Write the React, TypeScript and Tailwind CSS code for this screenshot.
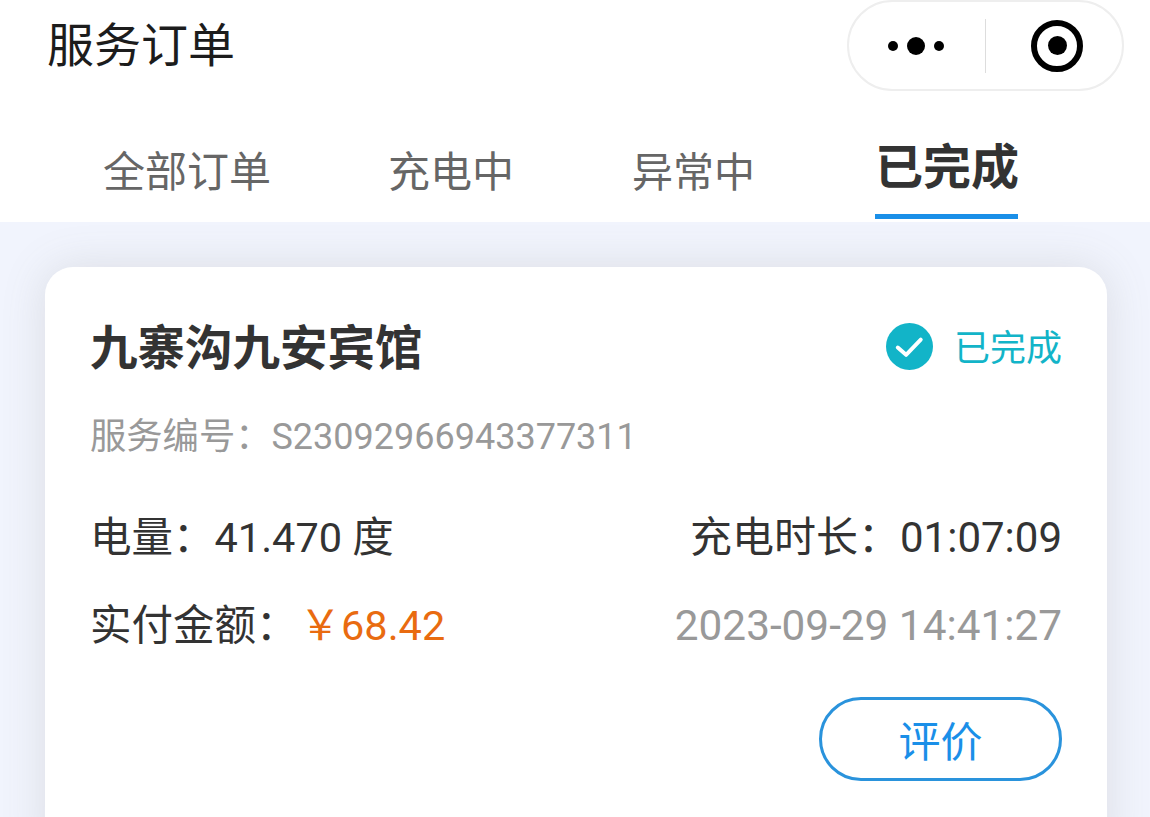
export default function App() {
  const font = { fontFamily: '"Roboto", "Noto Sans CJK SC", sans-serif' };
  return (
    <div style={font} className="w-[1150px] h-[817px] overflow-hidden bg-[#f1f4fd] text-[#333333]">
      <div className="bg-white h-[222px] relative z-10">
        <div className="flex justify-between items-start pl-[47px] pr-[26px] h-[122px]">
          <div className="text-[47px] leading-[56px] mt-[18px] text-[#1c1c1c]">服务订单</div>
          <div className="w-[277px] h-[91px] rounded-[46px] border-2 border-[#eeeeee] flex items-center bg-white">
            <div className="w-[95px] flex items-center justify-end gap-[9px]">
              <span className="w-[10px] h-[10px] rounded-full bg-black" />
              <span className="w-[18px] h-[18px] rounded-full bg-black" />
              <span className="w-[10px] h-[10px] rounded-full bg-black" />
            </div>
            <div className="w-[1px] h-[54px] bg-[#dddddd] ml-[41px]" />
            <div className="ml-[45px] w-[52px] h-[52px] rounded-full border-[6.5px] border-black flex items-center justify-center">
              <span className="w-[19px] h-[19px] rounded-full bg-black shrink-0" />
            </div>
          </div>
        </div>
        <div className="flex items-start pl-[103px] h-[100px]">
          <div className="text-[42px] leading-[50px] mt-[26px] text-[#666666]">全部订单</div>
          <div className="text-[42px] leading-[50px] mt-[26px] ml-[117px] text-[#666666]">充电中</div>
          <div className="text-[41px] leading-[50px] mt-[26px] ml-[118px] text-[#666666]">异常中</div>
          <div className="ml-[120px] flex flex-col items-center">
            <div className="text-[48px] leading-[56px] mt-[18px] font-bold text-[#333333]">已完成</div>
            <div className="w-[143px] h-[5px] bg-[#1a8fe8] mt-[18px] self-start" />
          </div>
        </div>
      </div>
      <div className="ml-[45px] mt-[45px] w-[1062px] h-[600px] bg-white rounded-[28px] shadow-[0_0_44px_rgba(110,110,100,0.17)] px-[45px] pt-[52px]">
        <div className="flex justify-between items-center h-[60px]">
          <div className="text-[47.5px] leading-[56px] font-bold text-[#333333]">九寨沟九安宾馆</div>
          <div className="flex items-center gap-[21px]">
            <svg width="47" height="47" viewBox="0 0 48 48" className="-mt-[5px]">
              <circle cx="24" cy="24" r="24" fill="#12b4c8" />
              <path d="M12 25 L20.5 32.5 L35.5 17" fill="none" stroke="white" strokeWidth="4" strokeLinecap="round" strokeLinejoin="round" />
            </svg>
            <span className="text-[36px] leading-[42px] text-[#12b4c8]">已完成</span>
          </div>
        </div>
        <div className="text-[36.3px] leading-[44px] text-[#999999] mt-[36px]">服务编号：<span className="text-[36px]">S23092966943377311</span></div>
        <div className="flex justify-between mt-[55px] leading-[48px] text-[#333333]">
          <div className="text-[41.5px]">电量：41.470 度</div>
          <div className="text-[42px]">充电时长：01:07:09</div>
        </div>
        <div className="flex justify-between mt-[40px] leading-[48px]">
          <div className="flex text-[41.5px]">
            <span className="text-[#333333]">实付金额：</span>
            <span className="text-[#e96b10] ml-[2px]">￥68.42</span>
          </div>
          <div className="text-[#999999] text-[42.3px]">2023-09-29 14:41:27</div>
        </div>
        <div className="flex justify-end mt-[47px]">
          <div className="w-[243px] h-[84px] rounded-[42px] border-[3px] border-[#2a93dc] flex items-center justify-center pt-[6px] text-[42px] text-[#1a8fe8]">评价</div>
        </div>
      </div>
    </div>
  );
}
